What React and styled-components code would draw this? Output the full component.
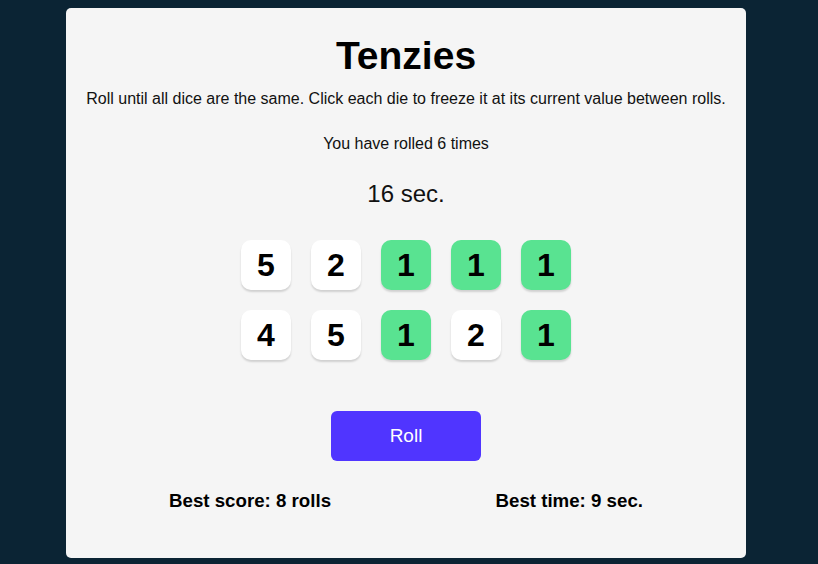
import React from "react";
import styled, { createGlobalStyle } from "styled-components";

const Global = createGlobalStyle`
  html, body { margin: 0; padding: 0; background: #0B2434; }
  body { font-family: "Liberation Sans", Arial, sans-serif; }
`;

const Page = styled.div`
  display: flex;
  justify-content: center;
  padding: 8px 6px 6px 0;
`;

const Card = styled.main`
  width: 680px;
  height: 550px;
  box-sizing: border-box;
  background: #F5F5F5;
  border-radius: 5px;
  display: flex;
  flex-direction: column;
  align-items: center;
  padding-top: 25px;
  color: #000;
`;

const Title = styled.h1`
  margin: 0;
  font-size: 39px;
  font-weight: 700;
  line-height: 46px;
`;

const Instructions = styled.p`
  margin: 10px 0 0;
  font-size: 16px;
  line-height: 20px;
  color: #111;
`;

const Rolls = styled.p`
  margin: 25px 0 0;
  font-size: 16px;
  line-height: 20px;
  color: #111;
`;

const Timer = styled.p`
  margin: 26px 0 0;
  font-size: 24px;
  line-height: 28px;
  color: #111;
`;

const DiceGrid = styled.div`
  display: grid;
  grid-template-columns: repeat(5, 50px);
  gap: 20px;
  margin-top: 32px;
`;

const Die = styled.button`
  width: 50px;
  height: 50px;
  border: none;
  border-radius: 10px;
  background: ${p => (p.$held ? "#59E391" : "#FFFFFF")};
  box-shadow: 0 2px 2px rgba(0, 0, 0, 0.15);
  font-family: "Liberation Sans", Arial, sans-serif;
  font-size: 32px;
  font-weight: 700;
  color: #000;
  display: flex;
  align-items: center;
  justify-content: center;
  padding: 0;
  cursor: pointer;
`;

const RollButton = styled.button`
  margin-top: 51px;
  width: 150px;
  height: 50px;
  border: none;
  border-radius: 6px;
  background: #5035FF;
  color: #fff;
  font-family: "Liberation Sans", Arial, sans-serif;
  font-size: 19px;
  cursor: pointer;
`;

const Stats = styled.div`
  margin-top: 30px;
  width: 474px;
  display: flex;
  justify-content: space-between;
`;

const Stat = styled.span`
  font-size: 18.7px;
  font-weight: 700;
  line-height: 20px;
`;

const dice = [
  { v: 5, h: false }, { v: 2, h: false }, { v: 1, h: true }, { v: 1, h: true }, { v: 1, h: true },
  { v: 4, h: false }, { v: 5, h: false }, { v: 1, h: true }, { v: 2, h: false }, { v: 1, h: true },
];

export default function App() {
  return (
    <>
      <Global />
      <Page>
        <Card>
          <Title>Tenzies</Title>
          <Instructions>
            Roll until all dice are the same. Click each die to freeze it at its current value between rolls.
          </Instructions>
          <Rolls>You have rolled 6 times</Rolls>
          <Timer>16 sec.</Timer>
          <DiceGrid>
            {dice.map((d, i) => (
              <Die key={i} $held={d.h}>{d.v}</Die>
            ))}
          </DiceGrid>
          <RollButton>Roll</RollButton>
          <Stats>
            <Stat>Best score: 8 rolls</Stat>
            <Stat>Best time: 9 sec.</Stat>
          </Stats>
        </Card>
      </Page>
    </>
  );
}
